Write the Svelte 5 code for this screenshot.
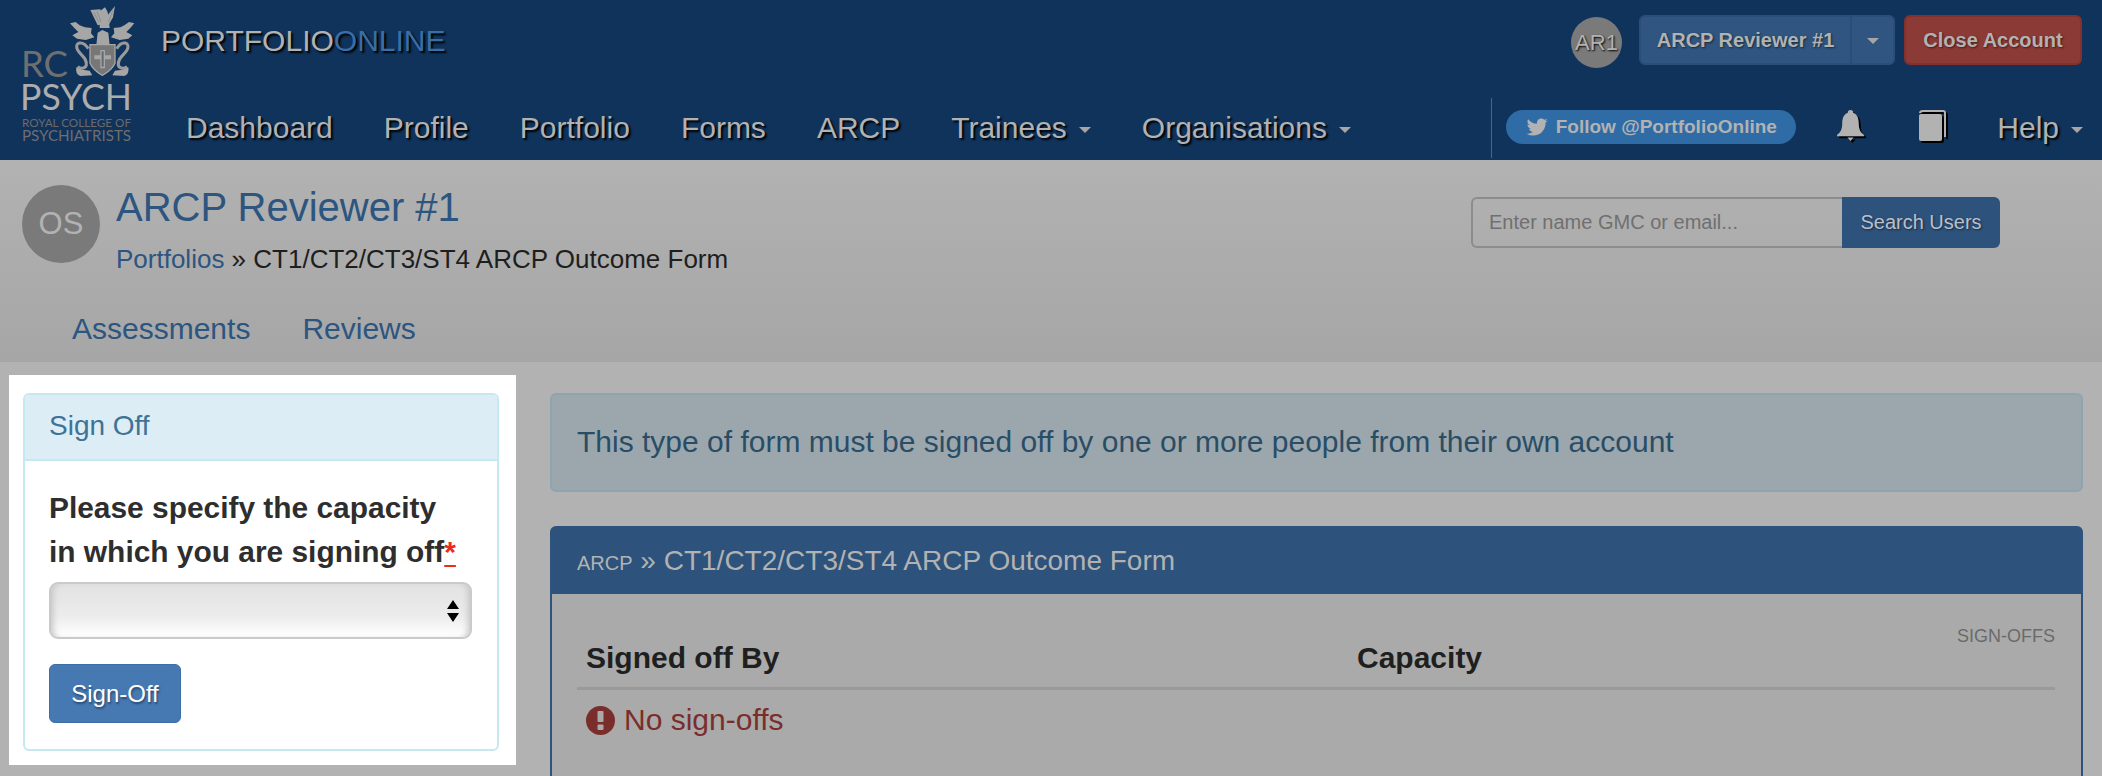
<script>
  // the page sits behind a dimmed backdrop, only the sign-off box stays lit.
  // colours below are the dimmed values as they appear on screen.
  const navLinks = [
    { label: "Dashboard" },
    { label: "Profile" },
    { label: "Portfolio" },
    { label: "Forms" },
    { label: "ARCP" },
    { label: "Trainees", caret: true },
    { label: "Organisations", caret: true },
  ];
  const tabs = ["Assessments", "Reviews"];
  const formName = "CT1/CT2/CT3/ST4 ARCP Outcome Form";
</script>

<div class="page">
  <header class="top">
    <svg class="logo" viewBox="0 0 150 150" width="150" height="150" aria-label="RC Psych logo">
      <g transform="translate(65 0) scale(0.3333)">
        <path class="lt" d="M76 30 L106 28 L118 72 L98 76 Z" />
        <path class="lt" d="M150 18 L144 52 L128 80 L118 58 Z" />
        <path class="lt" d="M106 32 L120 22 L128 36 L134 84 L104 84 Z" />
        <path class="fe" d="M86 36 L102 68 M96 34 L108 66 M144 30 L130 66" />
        <path class="lt" d="M15 70 L32 66 L44 76 L60 82 L80 84 L78 100 L88 112 L62 120 L36 116 L22 106 L40 96 L28 84 Z" />
        <path class="lt" d="M208 70 L192 66 L178 76 L166 82 L146 84 L148 100 L138 112 L164 120 L190 116 L202 106 L184 96 L196 84 Z" />
        <path class="lt" d="M98 98 L112 90 L130 98 L134 136 L94 136 Z" />
        <path class="st" d="M70 146 C52 118 26 128 38 150 C48 168 66 172 64 196 C60 208 46 206 38 200" />
        <path class="st" d="M155 146 C172 118 198 128 186 150 C176 168 158 172 160 196 C164 208 178 206 186 200" />
        <path class="lt" d="M34 202 Q52 212 74 212 L82 226 L46 228 Q30 222 34 202 Z" />
        <path class="lt" d="M190 202 Q172 212 150 212 L142 226 L178 228 Q194 222 190 202 Z" />
        <path class="shield" d="M75 134 H150 V190 Q140 212 112 226 Q85 212 75 190 Z" />
        <path class="lt" d="M106 150 H120 V205 H106 Z M88 166 H138 V178 H88 Z" />
        <path class="dk" d="M110 154 H116 V200 H110 Z" />
      </g>
      <text class="rc" x="21" y="77" textLength="47" lengthAdjust="spacingAndGlyphs">RC</text>
      <text class="psych" x="20" y="110" textLength="112" lengthAdjust="spacingAndGlyphs">PSYCH</text>
      <text class="royal" x="22" y="127" textLength="109" lengthAdjust="spacingAndGlyphs">ROYAL COLLEGE OF</text>
      <text class="psy2" x="22" y="141" textLength="109" lengthAdjust="spacingAndGlyphs">PSYCHIATRISTS</text>
    </svg>

    <div class="top-main">
      <div class="top-row">
        <div class="brand">PORTFOLIO<span>ONLINE</span></div>
        <div class="account">
          <div class="mini-avatar">AR1</div>
          <div class="split">
            <button class="acct-btn">ARCP Reviewer #1</button>
            <button class="acct-caret" aria-label="Account menu"><i class="caret"></i></button>
          </div>
          <button class="close-btn">Close Account</button>
        </div>
      </div>

      <div class="nav-row">
        <nav class="nav">
          {#each navLinks as link}
            <a href="#top">{link.label}{#if link.caret}<i class="caret nav-caret"></i>{/if}</a>
          {/each}
        </nav>
        <div class="nav-right">
          <a class="follow" href="#top">
            <svg viewBox="0 0 1792 1792" width="24" height="24">
              <path fill="currentColor" d="M1620 408q-67 98-162 167 1 14 1 42 0 130-38 259.500t-115.500 248.500-184.500 210.500-258 146-323 54.500q-271 0-496-145 35 4 78 4 225 0 401-138-105-2-188-64.500t-114-159.500q33 5 61 5 43 0 85-11-112-23-185.500-111.500t-73.500-205.500v-4q68 38 146 41-66-44-105-115t-39-154q0-88 44-163 121 149 294.500 238.500t371.500 99.500q-8-38-8-74 0-134 94.500-228.500t228.500-94.500q140 0 236 102 109-21 205-78-37 115-142 178 110-11 210-54z" />
            </svg>
            Follow @PortfolioOnline
          </a>
          <svg class="icon bell" viewBox="0 0 26 30" width="27" height="31">
            <path d="M13 0a2.6 2.6 0 0 1 2.6 2.6C20 4 21 9 21 13c0 6 2 9 5 11v1.500H0V24c3-2 5-5 5-11 0-4 1-9 5.400-10.400A2.600 2.600 0 0 1 13 0Z" />
            <path d="M10 26.500h6L13 30Z" />
          </svg>
          <svg class="icon book" viewBox="0 0 28 31" width="28" height="31">
            <path class="pages" d="M2 3Q2 1 5 1H25Q27 1 27 3V27" />
            <rect x="1" y="4" width="23" height="27" rx="2" />
          </svg>
          <a class="help" href="#top">Help<i class="caret nav-caret"></i></a>
        </div>
      </div>
    </div>
  </header>

  <section class="sub">
    <div class="sub-top">
      <div class="big-avatar">OS</div>
      <div class="who">
        <h1>ARCP Reviewer #1</h1>
        <div class="crumbs"><a href="#top">Portfolios</a> » {formName}</div>
      </div>
      <form class="search" onsubmit={(e) => e.preventDefault()}>
        <input type="text" placeholder="Enter name GMC or email..." />
        <button>Search Users</button>
      </form>
    </div>
    <div class="tabs">
      {#each tabs as t}
        <a href="#top">{t}</a>
      {/each}
    </div>
  </section>

  <div class="content">
    <aside class="lit">
      <div class="card">
        <div class="card-head">Sign Off</div>
        <div class="card-body">
          <label for="capacity">Please specify the capacity<br />in which you are signing off<abbr title="required">*</abbr></label>
          <div class="select-wrap">
            <select id="capacity"><option></option></select>
            <svg viewBox="0 0 12 22" width="12" height="22">
              <path d="M6 0L12 9H0Z M0 13H12L6 22Z" />
            </svg>
          </div>
          <button class="signoff">Sign-Off</button>
        </div>
      </div>
    </aside>

    <main class="main">
      <div class="alert">This type of form must be signed off by one or more people from their own account</div>
      <div class="panel">
        <div class="panel-head"><small>ARCP</small> » {formName}</div>
        <div class="panel-body">
          <div class="caption">SIGN-OFFS</div>
          <div class="thead">
            <span>Signed off By</span>
            <span>Capacity</span>
          </div>
          <div class="empty">
            <svg viewBox="0 0 29 29" width="29" height="29">
              <circle cx="14.500" cy="14.500" r="14.500" fill="#7a2e2b" />
              <rect x="11.500" y="5" width="6" height="11" rx="1" fill="#aaa" />
              <rect x="11.500" y="18.500" width="6" height="5.500" rx="1" fill="#aaa" />
            </svg>
            No sign-offs
          </div>
        </div>
      </div>
    </main>
  </div>
</div>

<style>
  :global(body) {
    margin: 0;
    background: #b2b2b2;
  }
  .page {
    height: 776px;
    overflow: hidden;
    font-family: "Liberation Sans", Arial, sans-serif;
    color: #1e1e1e;
  }
  a {
    text-decoration: none;
    color: inherit;
  }
  button {
    font-family: inherit;
    cursor: pointer;
  }

  /* top bar */
  .top {
    display: flex;
    height: 160px;
    background: #10335c;
    color: #b2b2b2;
    box-sizing: border-box;
  }
  .logo {
    flex: none;
  }
  .lt {
    fill: #a6a6a6;
  }
  .dk {
    fill: #5f6a75;
  }
  .fe {
    fill: none;
    stroke: #7d8288;
    stroke-width: 2;
  }
  .shield {
    fill: #777;
    stroke: #a6a6a6;
    stroke-width: 4;
  }
  .st {
    fill: none;
    stroke: #9a9a9a;
    stroke-width: 9;
  }
  .logo text {
    font-family: Lato, "Noto Sans", sans-serif;
  }
  .rc {
    font-size: 37px;
    font-weight: 400;
    fill: #6f6f6f;
  }
  .psych {
    font-size: 37px;
    font-weight: 400;
    fill: #adadad;
  }
  .royal {
    font-size: 11px;
    fill: #6a6a6a;
  }
  .psy2 {
    font-size: 16px;
    fill: #6e6e6e;
  }
  .top-main {
    flex: 1;
    min-width: 0;
    padding: 15px 20px 0 11px;
    display: flex;
    flex-direction: column;
  }
  .top-row {
    display: flex;
    justify-content: space-between;
    height: 83px;
  }
  .brand {
    font-size: 30px;
    line-height: 52px;
    margin-top: 0;
    text-shadow: 2px 2px 2px #000;
  }
  .brand span {
    color: #3a6ea8;
  }
  .account {
    display: flex;
    align-items: flex-start;
    gap: 9px;
  }
  .mini-avatar {
    width: 51px;
    height: 51px;
    margin: 2px 8px 0 0;
    border-radius: 50%;
    background: #7a7a7a;
    text-align: center;
    font-size: 22px;
    line-height: 51px;
    text-shadow: 1px 1px 2px #000;
  }
  .split {
    display: flex;
  }
  .split button,
  .close-btn {
    height: 50px;
    font-size: 20px;
    font-weight: 700;
    color: #b2b2b2;
    text-shadow: 1px 1px 2px #1a2a3c;
    border: 2px solid #2b4e78;
    background: #2f5580;
    box-sizing: border-box;
  }
  .acct-btn {
    width: 213px;
    padding: 0;
    border-radius: 6px 0 0 6px;
  }
  .acct-caret {
    width: 43px;
    padding: 0;
    border-left-width: 0 !important;
    border-radius: 0 6px 6px 0;
  }
  .caret {
    display: inline-block;
    width: 0;
    height: 0;
    border-top: 6px solid #a6a6a6;
    border-left: 6px solid transparent;
    border-right: 6px solid transparent;
    vertical-align: middle;
  }
  .close-btn {
    width: 178px;
    padding: 0;
    background: #8c3a36;
    border-color: #85302c;
    border-radius: 6px;
    text-shadow: 1px 1px 2px #4a1a18;
  }

  .nav-row {
    display: flex;
    justify-content: space-between;
    align-items: flex-start;
  }
  .nav {
    display: flex;
    gap: 51px;
    padding-left: 25px;
    font-size: 30px;
    line-height: 40px;
    padding-top: 10px;
  }
  .nav a,
  .help {
    text-shadow: 2px 2px 2px #000;
  }
  .nav-caret {
    margin-left: 12px;
    filter: none;
  }
  .nav-right {
    display: flex;
    align-items: flex-start;
    border-left: 1px solid #4d6480;
    height: 60px;
    margin-right: -1px;
    padding-left: 14px;
  }
  .follow {
    display: flex;
    align-items: center;
    justify-content: center;
    gap: 6px;
    width: 290px;
    height: 34px;
    margin-top: 12px;
    border-radius: 17px;
    background: #2f6ca6;
    font-size: 19px;
    font-weight: 700;
    color: #b2b2b2;
  }
  .icon {
    flex: none;
    margin-top: 12px;
    fill: #b2b2b2;
    filter: drop-shadow(2px 2px 0 #000);
  }
  .bell {
    margin-left: 41px;
  }
  .book {
    margin-left: 54px;
  }
  .book .pages {
    fill: none;
    stroke: #b2b2b2;
    stroke-width: 2;
  }
  .help {
    margin-left: 51px;
    font-size: 30px;
    line-height: 40px;
    margin-top: 10px;
    white-space: nowrap;
  }

  /* sub header */
  .sub {
    height: 202px;
    box-sizing: border-box;
    padding: 25px 0 0 22px;
    background: linear-gradient(#b2b2b2, #a6a6a6);
  }
  .sub-top {
    display: flex;
    height: 124px;
  }
  .big-avatar {
    flex: none;
    width: 78px;
    height: 78px;
    border-radius: 50%;
    background: #7a7a7a;
    color: #b2b2b2;
    text-align: center;
    font-size: 31px;
    line-height: 78px;
  }
  .who {
    flex: 1;
    padding-left: 16px;
  }
  h1 {
    margin: 0;
    font-size: 40px;
    font-weight: 400;
    line-height: 44px;
    color: #2c5580;
  }
  .crumbs {
    margin-top: 12px;
    font-size: 26px;
    line-height: 36px;
  }
  .crumbs a {
    color: #2c5580;
  }
  .search {
    display: flex;
    height: 51px;
    margin: 12px 102px 0 0;
  }
  .search input {
    width: 371px;
    box-sizing: border-box;
    padding: 0 16px;
    border: 2px solid #8c8c8c;
    border-right: 0;
    border-radius: 6px 0 0 6px;
    background: transparent;
    font: 20px "Liberation Sans", Arial, sans-serif;
    outline: none;
  }
  .search input::placeholder {
    color: #707070;
    opacity: 1;
  }
  .search button {
    width: 158px;
    border: 0;
    border-radius: 0 6px 6px 0;
    background: #2d527c;
    color: #b8c0cc;
    font-size: 20px;
    text-shadow: 1px 1px 2px #1a2a3c;
  }
  .tabs {
    display: flex;
    gap: 52px;
    padding-left: 50px;
    font-size: 30px;
    line-height: 40px;
    color: #2c5580;
  }

  /* content */
  .content {
    display: flex;
    align-items: flex-start;
    padding-top: 13px;
  }
  .lit {
    flex: none;
    box-sizing: border-box;
    width: 507px;
    height: 390px;
    margin-left: 9px;
    padding: 18px 17px 14px 14px;
    background: #fff;
  }
  .card {
    height: 100%;
    box-sizing: border-box;
    border: 2px solid #c6e8f1;
    border-radius: 6px;
    overflow: hidden;
  }
  .card-head {
    height: 66px;
    box-sizing: border-box;
    padding-left: 24px;
    background: #dcedf5;
    border-bottom: 2px solid #c6e8f1;
    color: #3e7396;
    font-size: 28px;
    line-height: 62px;
  }
  .card-body {
    padding: 25px 25px 0 24px;
  }
  label {
    display: block;
    font-size: 29.900px;
    font-weight: 700;
    line-height: 44px;
    color: #2e2e2e;
  }
  abbr {
    color: #ee2a1b;
    text-decoration: underline;
    text-underline-offset: 3px;
  }
  .select-wrap {
    position: relative;
    margin-top: 8px;
  }
  select {
    display: block;
    width: 100%;
    height: 57px;
    appearance: none;
    border: 2px solid #cacaca;
    border-radius: 9px;
    background: linear-gradient(#e2e2e2, #ececec 60%, #fff);
    box-shadow: inset 6px 0 6px -4px #c4c4c4, inset -6px 0 6px -4px #c4c4c4;
  }
  .select-wrap svg {
    position: absolute;
    right: 13px;
    top: 18px;
  }
  .signoff {
    display: block;
    width: 132px;
    height: 59px;
    margin-top: 25px;
    padding: 0;
    border: 1px solid #3d6ea6;
    border-radius: 6px;
    background: #4679b1;
    color: #fff;
    font-size: 24px;
    text-shadow: 1px 2px 2px #2a4a70;
  }

  .main {
    flex: none;
    width: 1533px;
    margin-left: 34px;
    padding-top: 18px;
  }
  .alert {
    height: 99px;
    box-sizing: border-box;
    padding-left: 25px;
    border: 2px solid #8ea5b0;
    border-radius: 6px;
    background: #9ba7ad;
    color: #2a4d66;
    font-size: 30px;
    line-height: 93px;
  }
  .panel {
    margin-top: 34px;
    border: 2px solid #2d527c;
    border-radius: 6px;
    background: #aaa;
  }
  .panel-head {
    height: 66px;
    box-sizing: border-box;
    padding-left: 25px;
    background: #2d527c;
    color: #b2b2b2;
    font-size: 28px;
    line-height: 66px;
  }
  .panel-head small {
    font-size: 20px;
  }
  .panel-body {
    position: relative;
    height: 300px;
    padding: 31px 26px 0 25px;
  }
  .caption {
    text-align: right;
    font-size: 18px;
    line-height: 22px;
    color: #6a6a6a;
  }
  .thead {
    display: grid;
    grid-template-columns: 771px 1fr;
    padding: 0 0 0 9px;
    height: 40px;
    border-bottom: 3px solid #9a9a9a;
    font-size: 30px;
    font-weight: 700;
    line-height: 22px;
    color: #1f1f1f;
  }
  .empty {
    display: flex;
    align-items: center;
    gap: 9px;
    padding: 12px 0 0 9px;
    font-size: 30px;
    line-height: 36px;
    color: #7a2e2b;
  }
</style>
